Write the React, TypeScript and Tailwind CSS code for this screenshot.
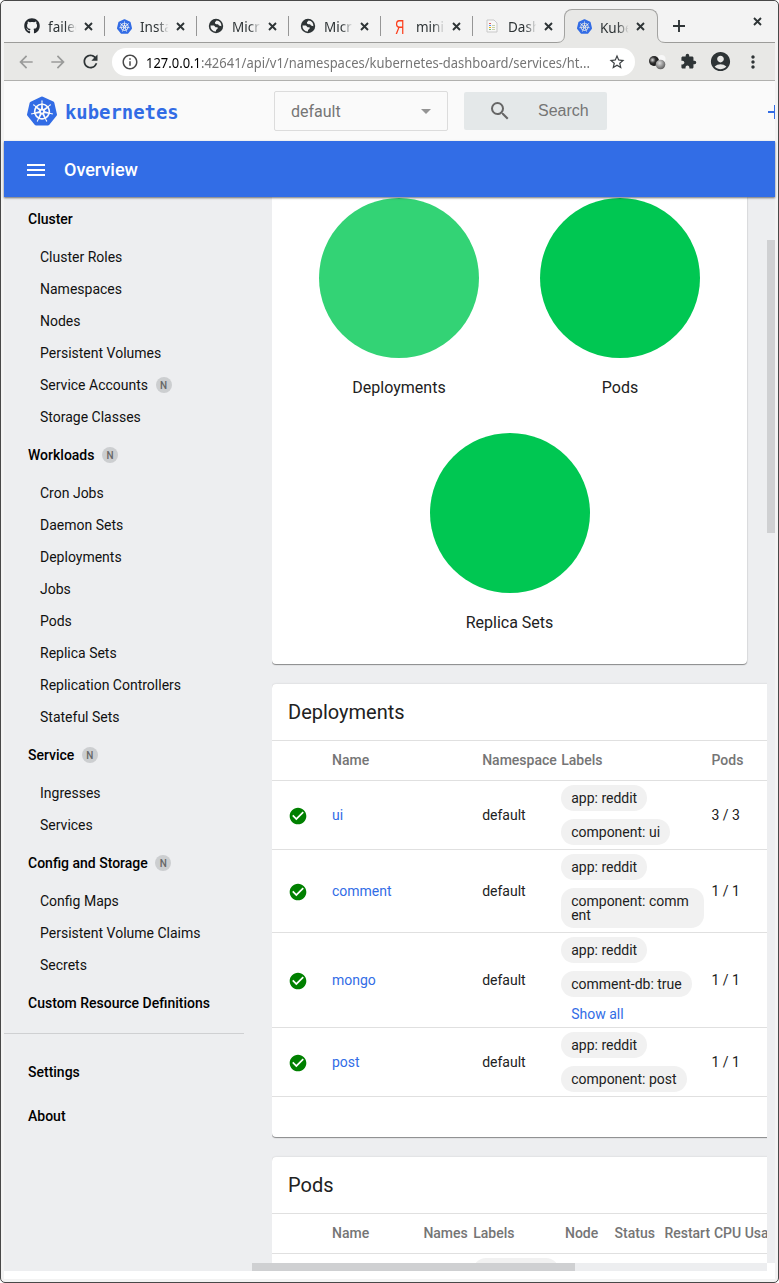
import type { ReactNode } from "react";
import {
  MdAccountCircle,
  MdAdd,
  MdArrowBack,
  MdArrowDropDown,
  MdArrowForward,
  MdCheckCircle,
  MdExtension,
  MdInfoOutline,
  MdMenu,
  MdMoreVert,
  MdRefresh,
  MdSearch,
  MdStarBorder,
} from "react-icons/md";
import { FaGithub } from "react-icons/fa";
import { SiKubernetes } from "react-icons/si";

function Cross({ size = 9 }: { size?: number }) {
  return (
    <svg width={size} height={size} viewBox="0 0 9 9" className="shrink-0">
      <path d="M1 1L8 8M8 1L1 8" stroke="#2e3436" strokeWidth="1.9" fill="none" />
    </svg>
  );
}

function KubeIcon() {
  return <SiKubernetes size={15} color="#326ce5" />;
}

function GlobeIcon() {
  return (
    <svg width="16" height="16" viewBox="0 0 16 16">
      <circle cx="8" cy="8" r="7.2" fill="#2e3436" />
      <path d="M8.6 2.6L7 4.2V5.4L8.4 6.2H10L11 7.6L13.4 8.2A5.6 5.6 0 0 0 8.6 2.6Z" fill="#f3f3f3" />
      <path d="M2.5 7.4H6L7.6 9.2H9.6V10.8L8 12V13.6A5.6 5.6 0 0 1 2.5 7.4Z" fill="#f3f3f3" />
    </svg>
  );
}

function SheetIcon() {
  return (
    <svg width="12" height="14" viewBox="0 0 12 14">
      <path d="M1 1H8L11 4V13H1Z" fill="#f8f8f8" stroke="#c9c9c9" />
      <path d="M3 4.5H5" stroke="#e06055" />
      <path d="M3 6.5H5" stroke="#5b8def" />
      <path d="M3 8.5H5" stroke="#f4b400" />
      <path d="M3 10.5H5" stroke="#7bb77b" />
      <path d="M6 6.5H9M6 8.5H9M6 10.5H9" stroke="#c8d3a8" />
    </svg>
  );
}

const tabs: { title: string; icon: ReactNode }[] = [
  { title: "failed", icon: <FaGithub size={16} color="#24292e" /> },
  { title: "Insta", icon: <KubeIcon /> },
  { title: "Micr", icon: <GlobeIcon /> },
  { title: "Micr", icon: <GlobeIcon /> },
  {
    title: "minik",
    icon: (
      <span className="inline-block scale-x-[0.62] font-['Liberation_Sans'] text-[21px] leading-none text-[#fc3f1d]">Я</span>
    ),
  },
  { title: "Dash", icon: <SheetIcon /> },
];

function TabBody({ title, icon }: { title: string; icon: ReactNode }) {
  return (
    <>
      <span className="flex w-4 shrink-0 items-center justify-center">{icon}</span>
      <span className="mr-[-3px] ml-2 w-8 shrink-0 origin-left scale-x-90 overflow-hidden whitespace-nowrap text-[15px] leading-5 text-[#2e3436] [mask-image:linear-gradient(to_right,black_60%,transparent)]">
        {title}
      </span>
      <span className="ml-[7px] flex">
        <Cross />
      </span>
    </>
  );
}

function TabStrip() {
  return (
    <div className="flex h-[42px] border-b border-[#9c9c9a] bg-[#f3f3f3] pl-2">
      {tabs.map((t, i) => (
        <div key={i} className="relative flex w-[92px] shrink-0 items-center pt-[9px] pl-3">
          <TabBody {...t} />
          {i < 5 && <span className="absolute top-[15px] right-[-1px] h-5 w-px bg-[#969696]" />}
        </div>
      ))}
      <div className="relative mt-2 -mb-px flex w-[94px] shrink-0 items-center rounded-t-lg border border-b-0 border-[#a3a3a1] bg-[#e8e8e6] pl-[11px]">
        <TabBody title="Kube" icon={<KubeIcon />} />
        <svg width="8" height="8" viewBox="0 0 8 8" className="absolute bottom-0 -left-[8px]">
          <path d="M8 0V8H0V7.5Q7.5 7.5 7.5 0Z" fill="#e8e8e6" />
          <path d="M0 7.5Q7.5 7.5 7.5 0" fill="none" stroke="#a3a3a1" />
        </svg>
        <svg width="8" height="8" viewBox="0 0 8 8" className="absolute -right-[8px] bottom-0">
          <path d="M0 0V8H8V7.5Q.5 7.5 .5 0Z" fill="#e8e8e6" />
          <path d="M8 7.5Q.5 7.5 .5 0" fill="none" stroke="#a3a3a1" />
        </svg>
      </div>
      <div className="flex flex-1 items-center justify-between pr-[13px] pl-[15px]">
        <svg width="12" height="12" viewBox="0 0 12 12" className="mt-2">
          <path d="M6 0V12M0 6H12" stroke="#2e3436" strokeWidth="1.9" />
        </svg>
        <Cross size={9} />
      </div>
    </div>
  );
}

function Toolbar() {
  return (
    <div className="flex h-[38px] items-center border-b border-[#b0b0ae] bg-[#e8e8e6] text-[#2e3436]">
      <div className="flex w-27 shrink-0 items-center gap-3 pl-3">
        <MdArrowBack size={20} color="#9a9b9a" />
        <MdArrowForward size={20} color="#9a9b9a" />
        <MdRefresh size={21} />
      </div>
      <div className="flex h-7 w-[523px] shrink-0 items-center rounded-full bg-white px-2">
        <MdInfoOutline size={18} color="#4a4a4a" className="ml-px shrink-0" />
        <span className="ml-[7px] w-0 flex-1 origin-left scale-x-[0.895] whitespace-nowrap text-[14.5px] leading-5 text-[#757575]">
          <span className="text-black">127.0.0.1</span>
          :42641/api/v1/namespaces/kubernetes-dashboard/services/ht...
        </span>
        <MdStarBorder size={18} color="#3c4043" className="mr-px shrink-0" />
      </div>
      <svg width="18" height="16" viewBox="0 0 18 16" className="ml-[13px]">
        <defs>
          <radialGradient id="dark" cx=".35" cy=".4" r=".6">
            <stop offset="0" stopColor="#ddd" />
            <stop offset=".5" stopColor="#333" />
            <stop offset="1" stopColor="#111" />
          </radialGradient>
          <radialGradient id="grey" cx=".4" cy=".35" r=".7">
            <stop offset="0" stopColor="#ddd" />
            <stop offset="1" stopColor="#555" />
          </radialGradient>
        </defs>
        <circle cx="13.5" cy="5" r="4" fill="#f7f7f7" />
        <circle cx="6" cy="7" r="5" fill="url(#dark)" />
        <circle cx="12.5" cy="10.5" r="4.8" fill="url(#grey)" />
      </svg>
      <MdExtension size={17} className="ml-[14px]" />
      <MdAccountCircle size={23} className="ml-[12px]" />
      <MdMoreVert size={20} className="ml-[11px]" />
    </div>
  );
}

function Header() {
  return (
    <div className="flex h-[60px] items-center overflow-hidden bg-[#fafafa]">
      <span className="ml-[23px] flex shrink-0">
        <SiKubernetes size={30} color="#326ce5" />
      </span>
      <span className="mt-0.5 ml-2 w-[202px] shrink-0 font-['DejaVu_Sans_Mono'] text-[18.9px] leading-6 font-bold text-[#326ce5]">
        kubernetes
      </span>
      <div className="ml-[7px] flex h-10 w-[174px] shrink-0 items-center justify-between rounded-xs border border-[#dcdcdc] pr-[9px] pl-4 text-base text-[#757575]">
        <span className="mt-px">default</span>
        <MdArrowDropDown size={24} color="#949494" />
      </div>
      <div className="ml-4 flex h-[38px] w-[143px] shrink-0 items-center rounded-xs bg-[#e4e8e9] pl-6">
        <MdSearch size={24} color="#666" />
        <span className="ml-[26px] font-['Liberation_Sans'] text-base text-[#757575]">Search</span>
      </div>
      <MdAdd size={24} color="#326ce5" className="mt-0.5 ml-[156px] shrink-0" />
    </div>
  );
}

const groups: { name: string; badge?: boolean; items: [string, boolean?][] }[] = [
  {
    name: "Cluster",
    items: [["Cluster Roles"], ["Namespaces"], ["Nodes"], ["Persistent Volumes"], ["Service Accounts", true], ["Storage Classes"]],
  },
  {
    name: "Workloads",
    badge: true,
    items: [["Cron Jobs"], ["Daemon Sets"], ["Deployments"], ["Jobs"], ["Pods"], ["Replica Sets"], ["Replication Controllers"], ["Stateful Sets"]],
  },
  { name: "Service", badge: true, items: [["Ingresses"], ["Services"]] },
  { name: "Config and Storage", badge: true, items: [["Config Maps"], ["Persistent Volume Claims"], ["Secrets"]] },
  { name: "Custom Resource Definitions", items: [] },
];

function Badge() {
  return (
    <span className="ml-[7.5px] flex size-4 items-center justify-center rounded-full bg-[#ccced0] pt-px text-[10px] leading-none font-medium text-[#666]">
      N
    </span>
  );
}

function Sidebar() {
  return (
    <nav className="w-[268px] shrink-0 text-sm text-[#111]">
      {groups.map((g) => (
        <div key={g.name}>
          <div className="flex h-11 items-center pl-6 font-medium text-black">
            {g.name}
            {g.badge && <Badge />}
          </div>
          {g.items.map(([name, badge]) => (
            <div key={name} className="flex h-8 items-center pl-9">
              {name}
              {badge && <Badge />}
            </div>
          ))}
        </div>
      ))}
      <div className="mt-2 mb-4 w-60 border-t border-[#cfd0d2]" />
      <div className="flex h-11 items-center pl-6 font-medium text-black">Settings</div>
      <div className="flex h-11 items-center pl-6 font-medium text-black">About</div>
    </nav>
  );
}

const cardShadow = "shadow-[0_1px_1px_rgba(0,0,0,0.4),0_0_2px_rgba(0,0,0,0.15)]";

function Donut({ label, light }: { label: string; light?: boolean }) {
  return (
    <div className="flex h-[235px] w-[221px] flex-col items-center pt-px">
      <div className={light ? "size-40 rounded-full bg-[#33d375]" : "size-40 rounded-full bg-[#00c752]"} />
      <div className="mt-[18px] text-base leading-6 text-[#212121]">{label}</div>
    </div>
  );
}

function Chip({ children }: { children: ReactNode }) {
  return (
    <span className="w-fit max-w-[143px] rounded-[13px] bg-[#f1f1f1] px-2.5 py-1.5 leading-[14px] break-all">{children}</span>
  );
}

const deployments = [
  { name: "ui", labels: ["app: reddit", "component: ui"], pods: "3 / 3", row: "h-[69px]" },
  { name: "comment", labels: ["app: reddit", "component: comment"], pods: "1 / 1", row: "h-[83px]" },
  { name: "mongo", labels: ["app: reddit", "comment-db: true"], more: true, pods: "1 / 1", row: "h-[95px]" },
  { name: "post", labels: ["app: reddit", "component: post"], pods: "1 / 1", row: "h-[69px]" },
];

const depCols = "grid grid-cols-[60px_150.2px_79px_150.3px_200px] border-b border-[#e0e0e0]";
const podCols = "grid grid-cols-[60px_91.4px_49.8px_91.8px_49.6px_49.8px_49.6px_100px] border-b border-[#e0e0e0]";

function Content() {
  return (
    <main className="w-[495px] shrink-0 overflow-hidden">
      <div className="-ml-1 flex w-[499px] flex-col gap-5 pl-1 text-sm text-[#212121]">
        <section className={`flex h-[467px] w-[475px] flex-wrap content-start justify-center rounded-b bg-white ${cardShadow}`}>
          <Donut label="Deployments" light />
          <Donut label="Pods" />
          <Donut label="Replica Sets" />
        </section>

        <section className={`h-[453px] w-[640px] rounded bg-white ${cardShadow}`}>
          <h2 className="flex h-[57px] items-center border-b border-[#e0e0e0] pl-4 text-xl">Deployments</h2>
          <div className={`h-10 items-center pb-0.5 font-medium text-[#757575] ${depCols}`}>
            <span />
            <span>Name</span>
            <span>Namespace</span>
            <span>Labels</span>
            <span>Pods</span>
          </div>
          {deployments.map((d) => (
            <div key={d.name} className={`items-center ${depCols} ${d.row}`}>
              <MdCheckCircle size={20} color="#008000" className="mt-0.5 ml-4" />
              <span className="text-[#326de6]">{d.name}</span>
              <span>default</span>
              <div className="flex flex-col gap-2 self-start pt-1">
                {d.labels.map((l) => (
                  <Chip key={l}>{l}</Chip>
                ))}
                {d.more && <span className="-mt-px pl-2.5 text-[#326de6]">Show all</span>}
              </div>
              <span>{d.pods}</span>
            </div>
          ))}
        </section>

        <section className={`h-[300px] w-[640px] rounded bg-white ${cardShadow}`}>
          <h2 className="flex h-[57px] items-center border-b border-[#e0e0e0] pl-4 text-xl">Pods</h2>
          <div className={`h-10 items-center pb-0.5 font-medium whitespace-nowrap text-[#757575] ${podCols}`}>
            <span />
            <span>Name</span>
            <span className="w-[45px] overflow-hidden">Namespace</span>
            <span>Labels</span>
            <span>Node</span>
            <span>Status</span>
            <span className="w-[46px] overflow-hidden">Restarts</span>
            <span>CPU Usage</span>
          </div>
          <div className="flex pt-1 pl-[201px]">
            <Chip>app: reddit</Chip>
          </div>
        </section>
      </div>
    </main>
  );
}

export default function App() {
  return (
    <div className="h-[1283px] w-[779px] bg-white">
      <div className="flex h-full flex-col overflow-hidden rounded-[5px] border border-[#484848] bg-[#f3f3f3] px-[3px] pb-[3px] font-['Roboto',sans-serif]">
        <div className="font-['Noto_Sans',sans-serif]">
          <TabStrip />
          <Toolbar />
        </div>
        <Header />
        <div className="relative z-10 flex h-14 shrink-0 items-center bg-[#326de6] text-white shadow-[0_1px_2px_rgba(0,0,0,0.55)]">
          <MdMenu size={24} className="mt-0.5 ml-5" />
          <span className="mt-0.5 ml-4 text-lg font-medium">Overview</span>
        </div>
        <div className="flex h-[1066px] overflow-hidden bg-[#edeef0]">
          <Sidebar />
          <Content />
          <div className="w-2 shrink-0 pt-[43px]">
            <div className="h-[293px] bg-[#cfd0d2]" />
          </div>
        </div>
        <div className="flex h-2 bg-[#edeef0]">
          <div className="ml-[248px] w-[323px] bg-[#cfd0d2]" />
          <div className="ml-auto w-2 bg-white" />
        </div>
        <div className="h-2 bg-white" />
      </div>
    </div>
  );
}
